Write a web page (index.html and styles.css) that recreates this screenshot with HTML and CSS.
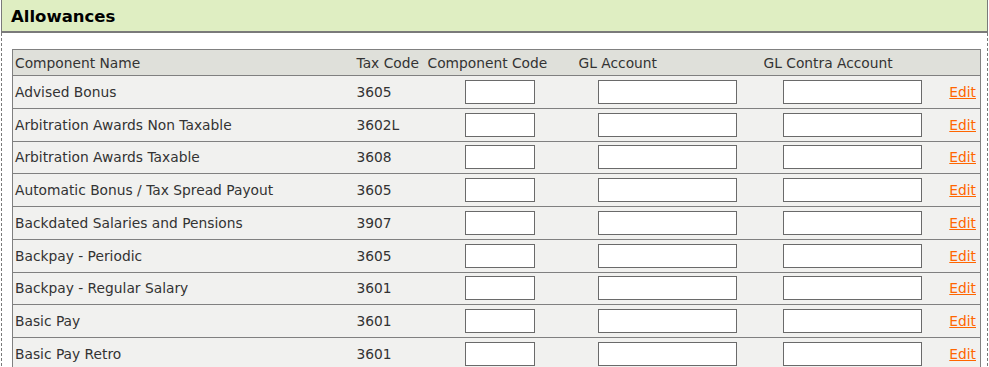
FILE: index.html
```html
<!DOCTYPE html>
<html lang="en">
<head>
    <meta charset="UTF-8">
    <title>Allowances</title>
    <link rel="stylesheet" href="styles.css">
</head>
<body>
    <div class="panel">
        <div class="panel-header">
            <h2>Allowances</h2>
        </div>
        <div class="panel-body">
            <table class="grid">
                <colgroup>
                    <col class="c-name">
                    <col class="c-tax">
                    <col class="c-code">
                    <col class="c-gl">
                    <col class="c-contra">
                    <col class="c-edit">
                </colgroup>
                <thead>
                    <tr>
                        <th>Component Name</th>
                        <th>Tax Code</th>
                        <th>Component Code</th>
                        <th>GL Account</th>
                        <th>GL Contra Account</th>
                        <th></th>
                    </tr>
                </thead>
                <tbody>
                    <tr>
                        <td>Advised Bonus</td><td>3605</td>
                        <td class="mid"><input type="text" class="short"></td>
                        <td class="mid"><input type="text" class="long"></td>
                        <td class="mid"><input type="text" class="long"></td>
                        <td class="edit"><a href="#">Edit</a></td>
                    </tr>
                    <tr>
                        <td>Arbitration Awards Non Taxable</td><td>3602L</td>
                        <td class="mid"><input type="text" class="short"></td>
                        <td class="mid"><input type="text" class="long"></td>
                        <td class="mid"><input type="text" class="long"></td>
                        <td class="edit"><a href="#">Edit</a></td>
                    </tr>
                    <tr>
                        <td>Arbitration Awards Taxable</td><td>3608</td>
                        <td class="mid"><input type="text" class="short"></td>
                        <td class="mid"><input type="text" class="long"></td>
                        <td class="mid"><input type="text" class="long"></td>
                        <td class="edit"><a href="#">Edit</a></td>
                    </tr>
                    <tr>
                        <td>Automatic Bonus / Tax Spread Payout</td><td>3605</td>
                        <td class="mid"><input type="text" class="short"></td>
                        <td class="mid"><input type="text" class="long"></td>
                        <td class="mid"><input type="text" class="long"></td>
                        <td class="edit"><a href="#">Edit</a></td>
                    </tr>
                    <tr>
                        <td>Backdated Salaries and Pensions</td><td>3907</td>
                        <td class="mid"><input type="text" class="short"></td>
                        <td class="mid"><input type="text" class="long"></td>
                        <td class="mid"><input type="text" class="long"></td>
                        <td class="edit"><a href="#">Edit</a></td>
                    </tr>
                    <tr>
                        <td>Backpay - Periodic</td><td>3605</td>
                        <td class="mid"><input type="text" class="short"></td>
                        <td class="mid"><input type="text" class="long"></td>
                        <td class="mid"><input type="text" class="long"></td>
                        <td class="edit"><a href="#">Edit</a></td>
                    </tr>
                    <tr>
                        <td>Backpay - Regular Salary</td><td>3601</td>
                        <td class="mid"><input type="text" class="short"></td>
                        <td class="mid"><input type="text" class="long"></td>
                        <td class="mid"><input type="text" class="long"></td>
                        <td class="edit"><a href="#">Edit</a></td>
                    </tr>
                    <tr>
                        <td>Basic Pay</td><td>3601</td>
                        <td class="mid"><input type="text" class="short"></td>
                        <td class="mid"><input type="text" class="long"></td>
                        <td class="mid"><input type="text" class="long"></td>
                        <td class="edit"><a href="#">Edit</a></td>
                    </tr>
                    <tr>
                        <td>Basic Pay Retro</td><td>3601</td>
                        <td class="mid"><input type="text" class="short"></td>
                        <td class="mid"><input type="text" class="long"></td>
                        <td class="mid"><input type="text" class="long"></td>
                        <td class="edit"><a href="#">Edit</a></td>
                    </tr>
                </tbody>
            </table>
        </div>
    </div>
</body>
</html>
```
FILE: styles.css
```css
body {
    margin: 0;
    padding: 0;
    font-family: "DejaVu Sans", Verdana, sans-serif;
    font-size: 13.8px;
    color: #333;
    background-color: #fff;
}

.panel {
    margin-left: 1px;
    width: 987px;
    box-sizing: border-box;
}

.panel-header {
    background-color: #dfeec2;
    border: 1px solid #7a7a7a;
    border-top: none;
    border-bottom-width: 2px;
    height: 33px;
    box-sizing: border-box;
    padding: 0 9px;
}

.panel-header h2 {
    margin: 0;
    font-size: 16.5px;
    line-height: 34px;
    color: #000;
}

.panel-body {
    border-left: 1px dashed #7a7a7a;
    border-right: 1px dashed #7a7a7a;
    padding: 16px 7px 0 10px;
}

.grid {
    border-collapse: collapse;
    table-layout: fixed;
    width: 968px;
    border: 1px solid #808080;
}

.c-name { width: 341px; }
.c-tax { width: 71px; }
.c-code { width: 150px; }
.c-gl { width: 185px; }
.c-contra { width: 185px; }
.c-edit { width: 36px; }

.grid th {
    background-color: #dfe0da;
    font-weight: normal;
    text-align: left;
    height: 25px;
    padding: 0 2px;
    white-space: nowrap;
    border-bottom: 1px solid #808080;
}

.grid th:nth-child(2),
.grid th:nth-child(3) {
    padding-left: 3px;
}

.grid th:nth-child(4),
.grid th:nth-child(5) {
    padding-left: 4px;
}

.grid td {
    background-color: #f1f1ef;
    height: 31.75px;
    padding: 0 2px;
    white-space: nowrap;
    border-bottom: 1px solid #808080;
}

.grid td:nth-child(2) {
    padding-left: 3px;
}

.grid td.mid {
    text-align: center;
}

.grid td.edit {
    text-align: right;
    padding-right: 4px;
}

.grid input {
    box-sizing: border-box;
    height: 24px;
    border: 1px solid #6a6a6a;
    background-color: #fff;
    margin: 0;
    vertical-align: middle;
}

.grid input.short { width: 70px; }
.grid input.long { width: 139px; }

.grid a {
    color: #ff6600;
    text-decoration: underline;
}
```
